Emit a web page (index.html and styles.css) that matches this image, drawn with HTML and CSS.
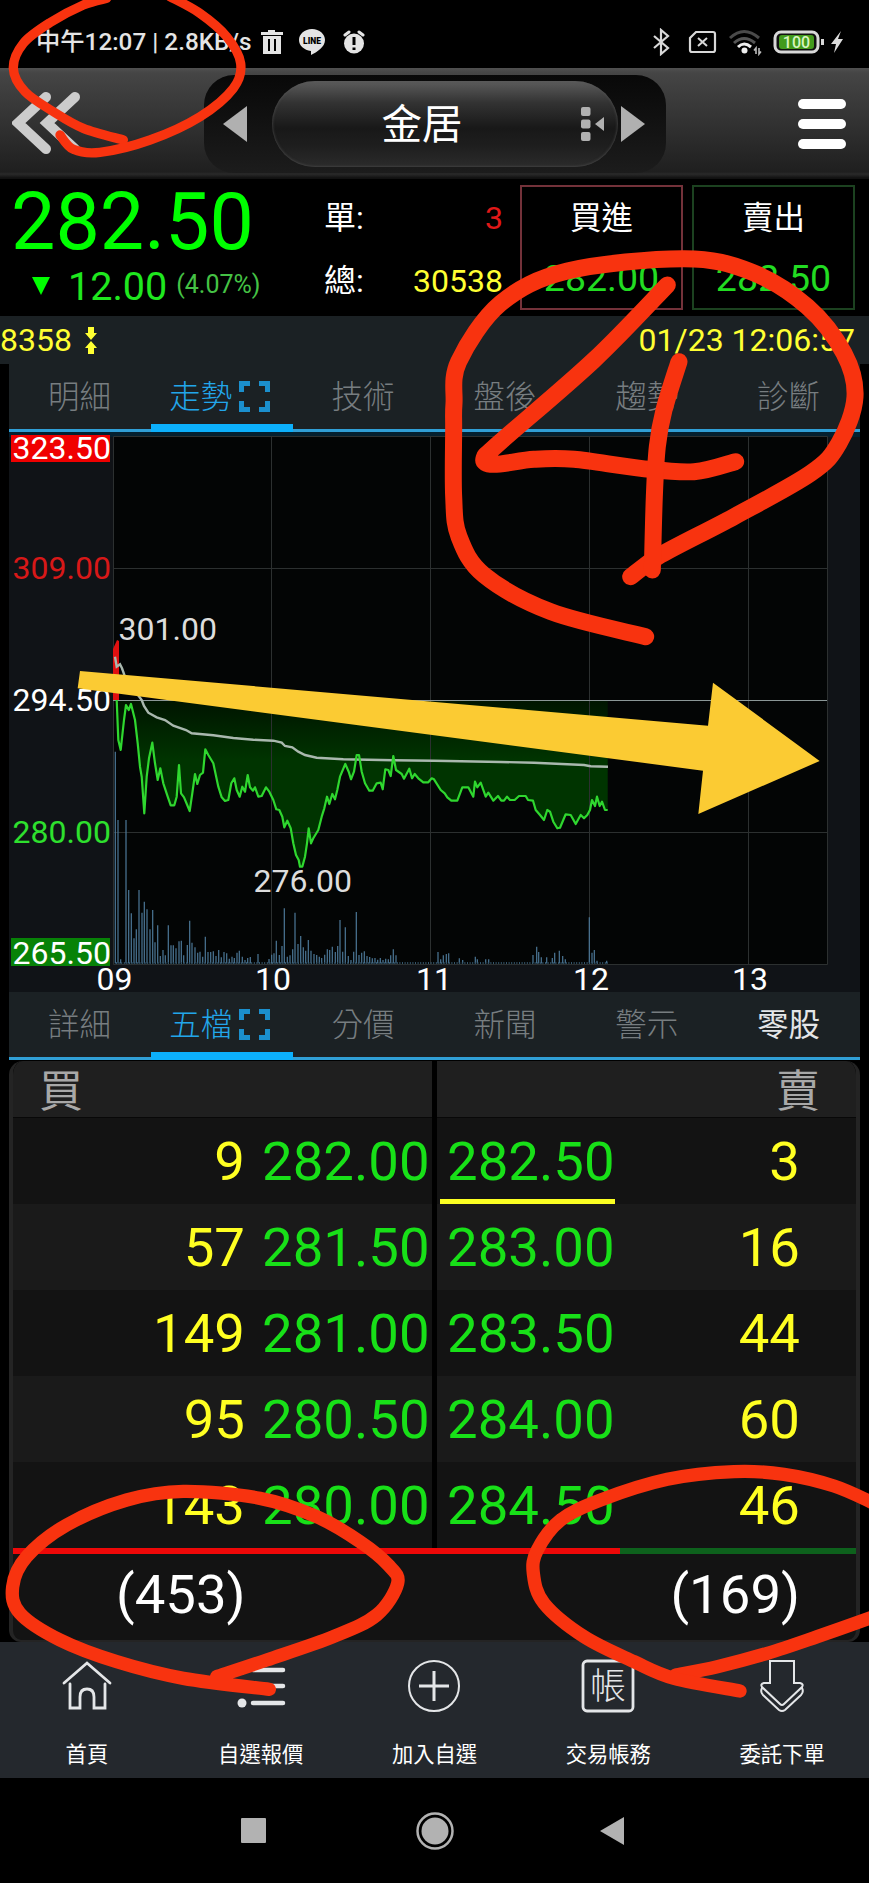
FILE: index.html
```html
<!DOCTYPE html>
<html lang="zh-Hant">
<head>
  <meta charset="UTF-8" />
  <meta name="viewport" content="width=device-width, initial-scale=1.0" />
  <title>金居 8358</title>
  <link rel="stylesheet" href="styles.css">
</head>
<body>
  <div class="status">
    <span class="clock">中午12:07 | 2.8KB/s</span>
    <svg class="trash" width="24" height="26" viewBox="0 0 24 26"><path fill="#e4e4e4" fill-rule="evenodd" d="M1 3H8V1H15V3H23V6H1ZM3 7H21V25H3ZM8 10V22H10V10ZM14 10V22H16V10Z"/></svg>
    <svg class="line-app" width="28" height="28" viewBox="0 0 28 28"><path fill="#e4e4e4" d="M14 1C6.500 1 1 6 1 12C1 17.500 6 22 13 23V27C19 24 27 19 27 12C27 6 21.500 1 14 1Z"/><text x="14" y="15.500" text-anchor="middle" class="line-text">LINE</text></svg>
    <svg class="alarm" width="22" height="24" viewBox="0 0 22 24"><circle cx="11" cy="13.500" r="10" fill="#e4e4e4"/><path d="M2 5L6 2M20 5L16 2" stroke="#e4e4e4" stroke-width="3" stroke-linecap="round"/><path d="M11 7V15M11 17.500V20" stroke="#000" stroke-width="3"/></svg>
    <div class="status-right">
      <svg width="18" height="28" viewBox="0 0 18 28"><path d="M2 8L16 20L9 26V2L16 8L2 20" fill="none" stroke="#d8d8d8" stroke-width="2.200"/></svg>
      <svg width="29" height="24" viewBox="0 0 29 24"><path d="M8 2H25Q27 2 27 4V20Q27 22 25 22H4Q2 22 2 20V8Z" fill="none" stroke="#d8d8d8" stroke-width="2.200"/><path d="M10 8L19 16M19 8L10 16" stroke="#d8d8d8" stroke-width="2"/></svg>
      <svg width="34" height="28" viewBox="0 0 34 28"><g fill="none" stroke-width="3"><path d="M2 10Q16-3 31 10" stroke="#4a4a4a"/><path d="M6 15Q16 6 27 15" stroke="#555"/><path d="M10 19Q16 13 23 19" stroke="#eee"/></g><circle cx="16.500" cy="22.500" r="3" fill="#eee"/><path d="M28 26V20L26 22.500M31 20V26L33 23.500" fill="none" stroke="#bbb" stroke-width="1.600"/></svg>
      <svg width="52" height="24" viewBox="0 0 52 24"><rect x="2" y="2" width="43" height="20" rx="6" fill="#111" stroke="#d8d8d8" stroke-width="3"/><rect x="6" y="5" width="35" height="14" rx="3" fill="#429a1c"/><rect x="48" y="9" width="3" height="6" fill="#d8d8d8"/><text x="23.500" y="17.500" text-anchor="middle" class="battery-text">100</text></svg>
      <svg width="14" height="24" viewBox="0 0 14 24"><path fill="#ddd" d="M11 1L1 14H6L4 23L13 9H8Z"/></svg>
    </div>
  </div>

  <header class="topbar">
    <svg class="back" width="70" height="64" viewBox="0 0 70 64"><path d="M34 5L6 31L34 57M63 5L35 31L63 57" fill="none" stroke="#ccc" stroke-width="10" stroke-linecap="round"/></svg>
    <div class="switcher">
      <svg width="24" height="36" viewBox="0 0 24 36"><path fill="#b0b0b0" d="M24 0V36L0 18Z"/></svg>
      <div class="pill">
        <h1>金居</h1>
        <svg width="25" height="34" viewBox="0 0 25 34"><g fill="#b0b0b0"><rect x="1" width="9.500" height="9" rx="2"/><rect x="1" y="12.500" width="9.500" height="9" rx="2"/><rect x="1" y="25" width="9.500" height="9" rx="2"/><path d="M24 10V24L15 17Z"/></g></svg>
      </div>
      <svg width="24" height="36" viewBox="0 0 24 36"><path fill="#b0b0b0" d="M0 0V36L24 18Z"/></svg>
    </div>
    <div class="menu"><span></span><span></span><span></span></div>
  </header>

  <section class="quote">
    <div class="last">
      <div class="price">282.50</div>
      <div class="change"><svg width="18" height="18" viewBox="0 0 18 18"><path fill="#0f0" d="M0 0H18L9 18Z"/></svg><span>12.00</span><small>(4.07%)</small></div>
    </div>
    <div class="volume">
      <div><span>單:</span><b class="red">3</b></div>
      <div><span>總:</span><b class="yellow">30538</b></div>
    </div>
    <div class="deal buy"><span>買進</span><b>282.00</b></div>
    <div class="deal sell"><span>賣出</span><b>282.50</b></div>
  </section>

  <div class="strip">
    <span>8358</span>
    <svg width="12" height="27" viewBox="0 0 12 27"><path fill="#ff3" d="M3 0H9V6H12L6 13L0 6H3ZM3 27H9V21H12L6 14L0 21H3Z"/></svg>
    <time>01/23 12:06:57</time>
  </div>

  <nav class="tabs">
    <a>明細</a>
    <a class="active">走勢<svg width="31" height="31" viewBox="0 0 31 31"><path d="M2.500 11V2.500H11M20 2.500H28.500V11M28.500 20V28.500H20M11 28.500H2.500V20" fill="none" stroke="#1b8fcd" stroke-width="5"/></svg></a>
    <a>技術</a>
    <a>盤後</a>
    <a>趨勢</a>
    <a>診斷</a>
  </nav>

  <svg class="chart" width="851" height="560" viewBox="9 432 851 560">
    <defs>
      <linearGradient id="fall" x1="0" y1="700" x2="0" y2="760" gradientUnits="userSpaceOnUse">
        <stop offset="0" stop-color="#001400"/>
        <stop offset="1" stop-color="#003400"/>
      </linearGradient>
    </defs>
    <rect x="9" y="432" width="851" height="5" fill="#04202f"/>
    <rect x="113" y="437" width="714" height="527" fill="#030505"/>
    <path id="area" fill="url(#fall)"/>
    <path class="grid" d="M113.500 436.500H827.500V964.500H113.500ZM271.500 437V964M430.500 437V964M589.500 437V964M748.500 437V964M113 568.500H827M113 832.500H827"/>
    <path class="mid" d="M113 700.500H827"/>
    <path id="bars"/>
    <path class="base" d="M116 963H608"/>
    <path fill="#e01010" d="M113 700V649L117 640L119 641V700Z"/>
    <path id="average"/>
    <path id="trend"/>
    <rect x="11" y="435" width="99" height="27" fill="#f00000"/>
    <rect x="11" y="938" width="99" height="28" fill="#078207"/>
    <text x="12.500" y="459" fill="#fff">323.50</text>
    <text x="12.500" y="579" fill="#d81818">309.00</text>
    <text x="12.500" y="711" fill="#fff">294.50</text>
    <text x="12.500" y="843" fill="#2ee02e">280.00</text>
    <text x="12.500" y="964" fill="#fff">265.50</text>
    <text x="118.500" y="640" fill="#ddd">301.00</text>
    <text x="253.500" y="892" fill="#ddd">276.00</text>
    <g fill="#fff" text-anchor="middle">
      <text x="114.500" y="990">09</text>
      <text x="273" y="990">10</text>
      <text x="434" y="990">11</text>
      <text x="591" y="990">12</text>
      <text x="750" y="990">13</text>
    </g>
  </svg>

  <nav class="tabs">
    <a>詳細</a>
    <a class="active">五檔<svg width="31" height="31" viewBox="0 0 31 31"><path d="M2.500 11V2.500H11M20 2.500H28.500V11M28.500 20V28.500H20M11 28.500H2.500V20" fill="none" stroke="#1b8fcd" stroke-width="5"/></svg></a>
    <a>分價</a>
    <a>新聞</a>
    <a>警示</a>
    <a class="bright">零股</a>
  </nav>

  <section class="book">
    <div class="row head"><div class="bid">買</div><div class="ask">賣</div></div>
    <div class="row"><div class="bid"><i>9</i><b>282.00</b></div><div class="ask"><b class="current">282.50</b><i>3</i></div></div>
    <div class="row"><div class="bid"><i>57</i><b>281.50</b></div><div class="ask"><b>283.00</b><i>16</i></div></div>
    <div class="row"><div class="bid"><i>149</i><b>281.00</b></div><div class="ask"><b>283.50</b><i>44</i></div></div>
    <div class="row"><div class="bid"><i>95</i><b>280.50</b></div><div class="ask"><b>284.00</b><i>60</i></div></div>
    <div class="row"><div class="bid"><i>143</i><b>280.00</b></div><div class="ask"><b>284.50</b><i>46</i></div></div>
    <div class="ratio"><span></span></div>
    <div class="sum"><span>(453)</span><span>(169)</span></div>
  </section>

  <nav class="bottom">
    <a><svg width="54" height="54" viewBox="0 0 54 54"><path d="M4 24L27 4L50 24M10 25V49H20V38Q20 30 27 30Q34 30 34 38V49H45V25" fill="none" stroke="#e4e6e8" stroke-width="2.800" stroke-linecap="round"/></svg>首頁</a>
    <a><svg width="54" height="54" viewBox="0 0 54 54"><path d="M19 11H49M19 27H49M19 44H49" stroke="#e4e6e8" stroke-width="4.500" stroke-linecap="round"/><g fill="#e4e6e8"><circle cx="8" cy="11" r="4.500"/><circle cx="8" cy="27" r="4.500"/><circle cx="8" cy="44" r="4.500"/></g></svg>自選報價</a>
    <a><svg width="54" height="54" viewBox="0 0 54 54"><circle cx="27" cy="27" r="25" fill="none" stroke="#e4e6e8" stroke-width="2"/><path d="M12 27H42M27 12V42" stroke="#e4e6e8" stroke-width="3"/></svg>加入自選</a>
    <a><svg width="54" height="54" viewBox="0 0 54 54"><rect x="2" y="2" width="50" height="50" rx="4" fill="none" stroke="#e4e6e8" stroke-width="2.800"/><text x="27" y="40" text-anchor="middle" class="account">帳</text></svg>交易帳務</a>
    <a><svg width="54" height="54" viewBox="0 0 54 54"><path d="M15 2H39V24H45Q49 25 47 28L29 45Q27 47 25 45L7 28Q5 25 9 24H15ZM7 29Q5 33 8 36L24 51Q27 53 30 51L46 36Q49 33 47 29" fill="none" stroke="#e4e6e8" stroke-width="2"/></svg>委託下單</a>
  </nav>

  <footer class="system">
    <svg width="25" height="25" viewBox="0 0 25 25"><rect width="25" height="25" rx="1" fill="#b2b2b2"/></svg>
    <svg width="38" height="38" viewBox="0 0 38 38"><circle cx="19" cy="19" r="17.500" fill="none" stroke="#b2b2b2" stroke-width="2.500"/><circle cx="19" cy="19" r="13.500" fill="#b2b2b2"/></svg>
    <svg width="24" height="28" viewBox="0 0 24 28"><path fill="#b2b2b2" d="M24 0V28L0 14Z"/></svg>
  </footer>

  <!-- hand-drawn marks, over everything -->
  <svg class="marks" viewBox="0 0 2607 5649">
    <path fill="#fbcb33" d="M240 2013L2124 2177L2139 2048L2459 2283L2095 2442L2109 2312L233 2065Z"/>
    <g id="pen"></g>
  </svg>

  <script src="script.js"></script>
</body>
</html>
```
FILE: styles.css
```css
body {
  margin: 0;
  width: 869px;
  height: 1883px;
  position: relative;
  overflow: hidden;
  background: #000;
  color: #fff;
  font-family: Roboto, "Noto Sans CJK TC", sans-serif;
}
svg {
  display: block;
  flex: none;
}
b, i {
  font-weight: 400;
  font-style: normal;
}

/* status bar */
.status {
  display: flex;
  align-items: center;
  height: 68px;
  padding: 16px 25px 0 36px;
  box-sizing: border-box;
  color: #e4e4e4;
}
.clock {
  width: 215px;
  font-size: 24.3px;
  font-weight: 500;
  line-height: 32px;
  white-space: nowrap;
}
.trash {
  margin-left: 9px;
}
.line-app {
  margin-left: 14px;
}
.alarm {
  margin-left: 17px;
}
.line-text {
  font-size: 8.5px;
  font-weight: 900;
}
.status-right {
  display: flex;
  align-items: center;
  margin-left: auto;
}
.status-right svg {
  margin-left: 5px;
}
.status-right svg:nth-child(2) {
  margin-left: 18px;
}
.status-right svg:nth-child(3), .status-right svg:nth-child(4) {
  margin-left: 11px;
}
.battery-text {
  font-size: 16px;
  font-weight: 500;
  fill: #d8f5c0;
}

/* title bar */
.topbar {
  display: flex;
  align-items: center;
  height: 111px;
  padding: 0 23px 0 12px;
  box-sizing: border-box;
  background: linear-gradient(#505050 0, #454545 5px, #1f1f1f 104px, #2a2a2a 106px, #111 110px);
}
.switcher {
  display: flex;
  align-items: center;
  justify-content: space-between;
  width: 462px;
  height: 98px;
  margin-left: 122px;
  padding: 0 21px 0 19px;
  box-sizing: border-box;
  border-radius: 30px;
  background: linear-gradient(#080808, #141414 60%, #1c1c1c);
}
.pill {
  display: flex;
  align-items: center;
  justify-content: flex-end;
  width: 346px;
  height: 86px;
  margin: 0 3px 0 24px;
  padding-right: 13px;
  box-sizing: border-box;
  border-radius: 43px;
  background: linear-gradient(#5c5c5c, #333 25%, #181818 55%, #1e1e1e 75%, #2b2b2b);
  box-shadow: inset 0 0 3px #555;
}
.pill h1 {
  margin: 3px 117px 0 0;
  font-size: 40.5px;
  font-weight: 400;
  line-height: 60px;
}
.menu {
  display: flex;
  flex-direction: column;
  gap: 10px;
  margin-left: auto;
}
.menu span {
  width: 48px;
  height: 10px;
  border-radius: 5px;
  background: #fff;
}

/* quote */
.quote {
  display: flex;
  height: 137px;
  padding: 6px 14px 6px 11px;
  box-sizing: border-box;
}
.last {
  width: 313px;
}
.price {
  color: #0f0;
  font-size: 79px;
  line-height: 75px;
}
.change {
  display: flex;
  align-items: center;
  height: 52px;
  padding-left: 21px;
  color: #1fe81f;
}
.change span {
  margin-left: 18px;
  font-size: 39.5px;
}
.change small {
  margin: -4px 0 0 9px;
  color: #45c245;
  font-size: 25px;
}
.volume {
  width: 179px;
  margin-right: 17px;
  font-size: 32px;
}
.volume div {
  display: flex;
  justify-content: space-between;
  line-height: 66px;
  height: 63px;
}
.volume b {
  font-size: 32px;
}
.red {
  color: #e01818;
}
.yellow {
  color: #ff3;
}
.deal {
  width: 163px;
  height: 125px;
  box-sizing: border-box;
  border: 2px solid #74323a;
  text-align: center;
}
.deal span, .deal b {
  display: block;
  font-size: 31.5px;
  line-height: 63px;
}
.deal b {
  color: #22dc22;
  font-size: 37.5px;
  line-height: 57px;
}
.sell {
  margin-left: 9px;
  border-color: #1c4220;
}

.strip {
  display: flex;
  align-items: center;
  height: 48px;
  padding: 0 14px 0 0;
  background: #1b2124;
  color: #ff3;
  font-size: 32px;
  line-height: 46px;
}
.strip svg {
  margin-left: 13px;
}
.strip time {
  margin: -1px 0 0 auto;
}

/* tabs */
.tabs {
  display: grid;
  grid-template-columns: repeat(6, 1fr);
  height: 68px;
  margin: 0 9px;
  background: linear-gradient(to top, #309fd6 3.5px, #1b2124 3.5px);
}
.tabs a {
  display: flex;
  align-items: center;
  justify-content: center;
  height: 68px;
  box-sizing: border-box;
  padding: 0 1px 8px 0;
  color: #777d80;
  font-size: 31.5px;
  font-weight: 300;
}
.tabs svg {
  margin: 4px 0 0 7px;
}
.tabs .active {
  padding: 0 4px 0 0;
  border-bottom: 8px solid #0cb0fc;
  color: #22a6ea;
}
.tabs .bright {
  color: #e4e6e8;
  font-weight: 400;
}

/* intraday chart */
.chart {
  margin-left: 9px;
  overflow: visible;
  background: #101317;
  font-size: 32px;
}
.grid {
  fill: none;
  stroke: #2c3030;
}
.mid {
  stroke: #8b9797;
}
.base {
  stroke: #35566c;
  stroke-width: 2;
  stroke-dasharray: 1 1.6;
}
#bars {
  stroke: #4c7898;
  stroke-width: 1.2;
}
#average {
  fill: none;
  stroke: #a9b8ae;
  stroke-width: 2.4;
}
#trend {
  fill: none;
  stroke: #2fd72f;
  stroke-width: 2.2;
  stroke-linejoin: round;
}

/* best five */
.book {
  margin: 1px 9px 0;
  height: 581px;
  box-sizing: border-box;
  border: solid #242424;
  border-width: 0 4px 2px;
  border-radius: 14px 14px 12px 12px;
  overflow: hidden;
  background: #131313;
  font-size: 54.5px;
}
.row {
  display: grid;
  grid-template-columns: 1fr 1fr;
  gap: 5px;
  height: 86px;
  background: #000;
  line-height: 87px;
}
.row > div {
  display: flex;
  height: 86px;
  background: #131313;
}
.row:nth-child(odd) > div {
  background: #1a1a1a;
}
.head {
  height: 57px;
  line-height: 63px;
  color: #a8a8a8;
  font-size: 44px;
}
.row.head > div {
  height: 57px;
  box-sizing: border-box;
  background: #1f1f1f;
  border-bottom: 1px solid #080808;
}
.head .bid {
  padding-left: 26px;
}
.head .ask {
  justify-content: flex-end;
  padding-right: 36px;
}
.book i {
  color: #ff2;
  text-align: right;
}
.book b {
  color: #18e018;
}
.bid i {
  width: 232px;
}
.bid b {
  margin-left: 17px;
}
.ask b {
  height: 81px;
  margin-left: 3px;
  padding-left: 7px;
}
.ask .current {
  border-bottom: 5px solid #fbff22;
}
.ask i {
  margin-left: auto;
  padding-right: 56px;
}
.ratio {
  height: 6px;
  background: #0d611c;
}
.ratio span {
  display: block;
  width: 72%;
  height: 6px;
  background: #ee0808;
}
.sum {
  display: flex;
  justify-content: space-between;
  padding: 0 56px 0 103px;
  line-height: 80px;
}

/* bottom menu */
.bottom {
  display: grid;
  grid-template-columns: repeat(5, 1fr);
  height: 136px;
  background: #24282d;
}
.bottom a {
  display: flex;
  flex-direction: column;
  align-items: center;
  padding-top: 17px;
  font-size: 21.3px;
  line-height: 32px;
}
.bottom svg {
  margin-bottom: 26px;
}
.account {
  font-size: 36px;
  font-weight: 300;
  fill: #e4e6e8;
}
.system {
  display: flex;
  align-items: center;
  height: 105px;
  padding-left: 241px;
}
.system svg:nth-child(2) {
  margin: 0 146px 0 150px;
}

.marks {
  position: absolute;
  left: 0;
  top: 0;
  width: 869px;
  height: 1883px;
}
#pen {
  fill: none;
  stroke: #f8330f;
  stroke-linecap: round;
  stroke-linejoin: round;
}
```
FILE: script.js
```js
// all chart points are in thirds of a pixel, y counted from the 294.50 line
const trend = [350,0,355,120,362,150,372,60,378,15,386,30,393,12,405,60,413,130,420,200,425,230,433,340,440,230,447,175,457,128,465,190,473,240,481,205,490,250,503,290,512,316,523,316,530,290,537,195,543,280,552,292,569,333,577,280,585,222,592,252,600,225,609,218,616,148,625,165,640,190,655,260,665,292,675,303,685,300,694,250,703,235,710,270,719,290,727,260,735,275,743,225,750,262,759,272,765,262,775,290,785,288,798,262,808,275,820,300,829,328,838,330,847,350,853,382,862,362,872,385,880,430,888,465,896,480,900,500,907,500,915,470,921,430,926,385,933,430,940,415,955,390,965,350,973,325,981,290,988,312,997,282,1005,298,1012,270,1020,230,1036,192,1046,215,1053,238,1062,215,1070,165,1077,165,1085,215,1095,250,1108,272,1118,272,1130,250,1142,248,1148,268,1156,208,1165,210,1172,228,1180,168,1188,210,1205,222,1212,236,1228,206,1236,235,1244,222,1255,235,1270,247,1285,247,1295,235,1302,238,1322,270,1334,280,1342,292,1354,302,1372,302,1387,262,1405,262,1420,290,1425,245,1432,262,1442,248,1457,290,1465,278,1480,302,1494,288,1504,302,1512,302,1521,290,1530,300,1544,300,1557,288,1577,288,1584,300,1599,302,1607,330,1620,345,1632,360,1642,330,1650,335,1660,365,1672,385,1680,383,1697,343,1712,345,1727,372,1742,345,1752,355,1762,345,1770,330,1776,300,1785,318,1791,290,1799,318,1806,305,1815,330,1823,330];
const average = [345,-130,350,-100,360,-107,366,-95,374,-72,410,-20,425,0,432,18,445,38,470,52,495,60,520,77,558,90,575,100,640,106,700,114,760,119,820,122,845,128,855,138,877,142,895,155,915,165,950,173,1030,178,1180,181,1302,182,1502,186,1602,188,1702,193,1752,195,1772,199,1824,200];
const volume = [346,155,354,360,362,778,378,360,386,570,394,640,402,715,409,688,417,570,426,638,433,605,441,628,450,688,458,630,465,727,473,676,481,768,489,750,496,766,505,676,513,736,520,736,528,745,537,724,544,722,551,766,562,735,569,662,576,728,585,742,593,758,600,755,608,770,616,710,624,756,632,756,640,754,648,768,656,750,664,772,672,756,680,760,688,776,696,770,703,774,711,758,718,752,727,770,735,780,743,774,751,771,774,762,807,777,815,764,822,760,829,722,838,765,846,738,853,625,862,770,870,766,878,748,885,638,894,732,902,708,910,742,917,752,925,720,933,752,942,762,950,765,958,770,965,774,974,764,982,748,989,750,997,740,1006,756,1013,738,1020,660,1028,755,1036,682,1045,768,1053,780,1061,755,1069,636,1077,765,1085,758,1093,754,1101,768,1109,771,1117,775,1125,774,1133,779,1141,774,1149,780,1157,776,1165,778,1172,766,1180,748,1188,766,1314,756,1322,778,1330,766,1339,762,1346,760,1378,775,1388,780,1426,770,1432,778,1457,778,1466,778,1599,765,1610,740,1616,756,1624,772,1640,772,1657,774,1664,758,1678,752,1688,768,1696,778,1768,652,1776,758,1783,750,1791,782,1820,782];

// flat list -> [[x, y], ...]
function pairs(list) {
  const out = [];
  for (let i = 0; i < list.length; i += 2) out.push([list[i], list[i + 1]]);
  return out;
}

const toPage = list => pairs(list).map(([x, y]) => [(x / 3).toFixed(1), (700 + y / 3).toFixed(1)]);

const trendLine = 'M' + toPage(trend).map(p => p.join(' ')).join('L');
document.getElementById('trend').setAttribute('d', trendLine);
document.getElementById('area').setAttribute('d', trendLine + 'V700Z');
document.getElementById('average').setAttribute('d', 'M' + toPage(average).map(p => p.join(' ')).join('L'));
document.getElementById('bars').setAttribute('d', toPage(volume).map(([x, y]) => `M${x} 963.5V${y}`).join(''));

// pen strokes: width, then the points
const strokes = [
  [28, [370,420,250,385,160,335,75,275,40,205,70,130,150,68,250,15,320,-5]],
  [28, [510,-10,600,40,680,110,722,190,700,265,600,350,450,420,300,457,220,448,180,405]],
  [51, [1937,1910,1652,1835,1452,1725,1377,1610,1361,1490,1361,1290,1362,1210,1376,1085,1502,910,1702,813,2052,776,2252,815,2422,920,2532,1060,2565,1190,2517,1330,2432,1420,2202,1550,1982,1665,1892,1730]],
  [51, [2002,855,1782,1080,1502,1325,1452,1375,1482,1393,1602,1378,1722,1378,1922,1405,2082,1415,2207,1385]],
  [51, [2037,1085,1992,1230,1972,1340,1963,1490,1957,1710]],
  [40, [650,5030,800,4980,1000,4910,1130,4845,1193,4750,1165,4695,1080,4625,950,4550,780,4495,550,4474,380,4500,200,4575,80,4670,38,4760,60,4840,180,4920,350,4985,550,5035,808,5068]],
  [40, [2027,5025,2152,5000,2302,4960,2452,4910,2622,4850]],
  [40, [2622,4510,2502,4458,2352,4423,2202,4415,2002,4438,1802,4500,1682,4560,1612,4650,1600,4720,1632,4810,1752,4910,1902,4985,2022,5035,2220,5073]]
];

// smooth curve through every point
function curve(p) {
  let d = `M${p[0]}`;
  for (let i = 0; i < p.length - 1; i++) {
    const a = p[i - 1] || p[i], b = p[i], c = p[i + 1], e = p[i + 2] || c;
    d += `C${b[0] + (c[0] - a[0]) / 6} ${b[1] + (c[1] - a[1]) / 6} ${c[0] - (e[0] - b[0]) / 6} ${c[1] - (e[1] - b[1]) / 6} ${c[0]} ${c[1]}`;
  }
  return d;
}

const pen = document.getElementById('pen');
strokes.forEach(([width, list]) => {
  const path = document.createElementNS('http://www.w3.org/2000/svg', 'path');
  path.setAttribute('d', curve(pairs(list)));
  path.setAttribute('stroke-width', width);
  pen.appendChild(path);
});
```
